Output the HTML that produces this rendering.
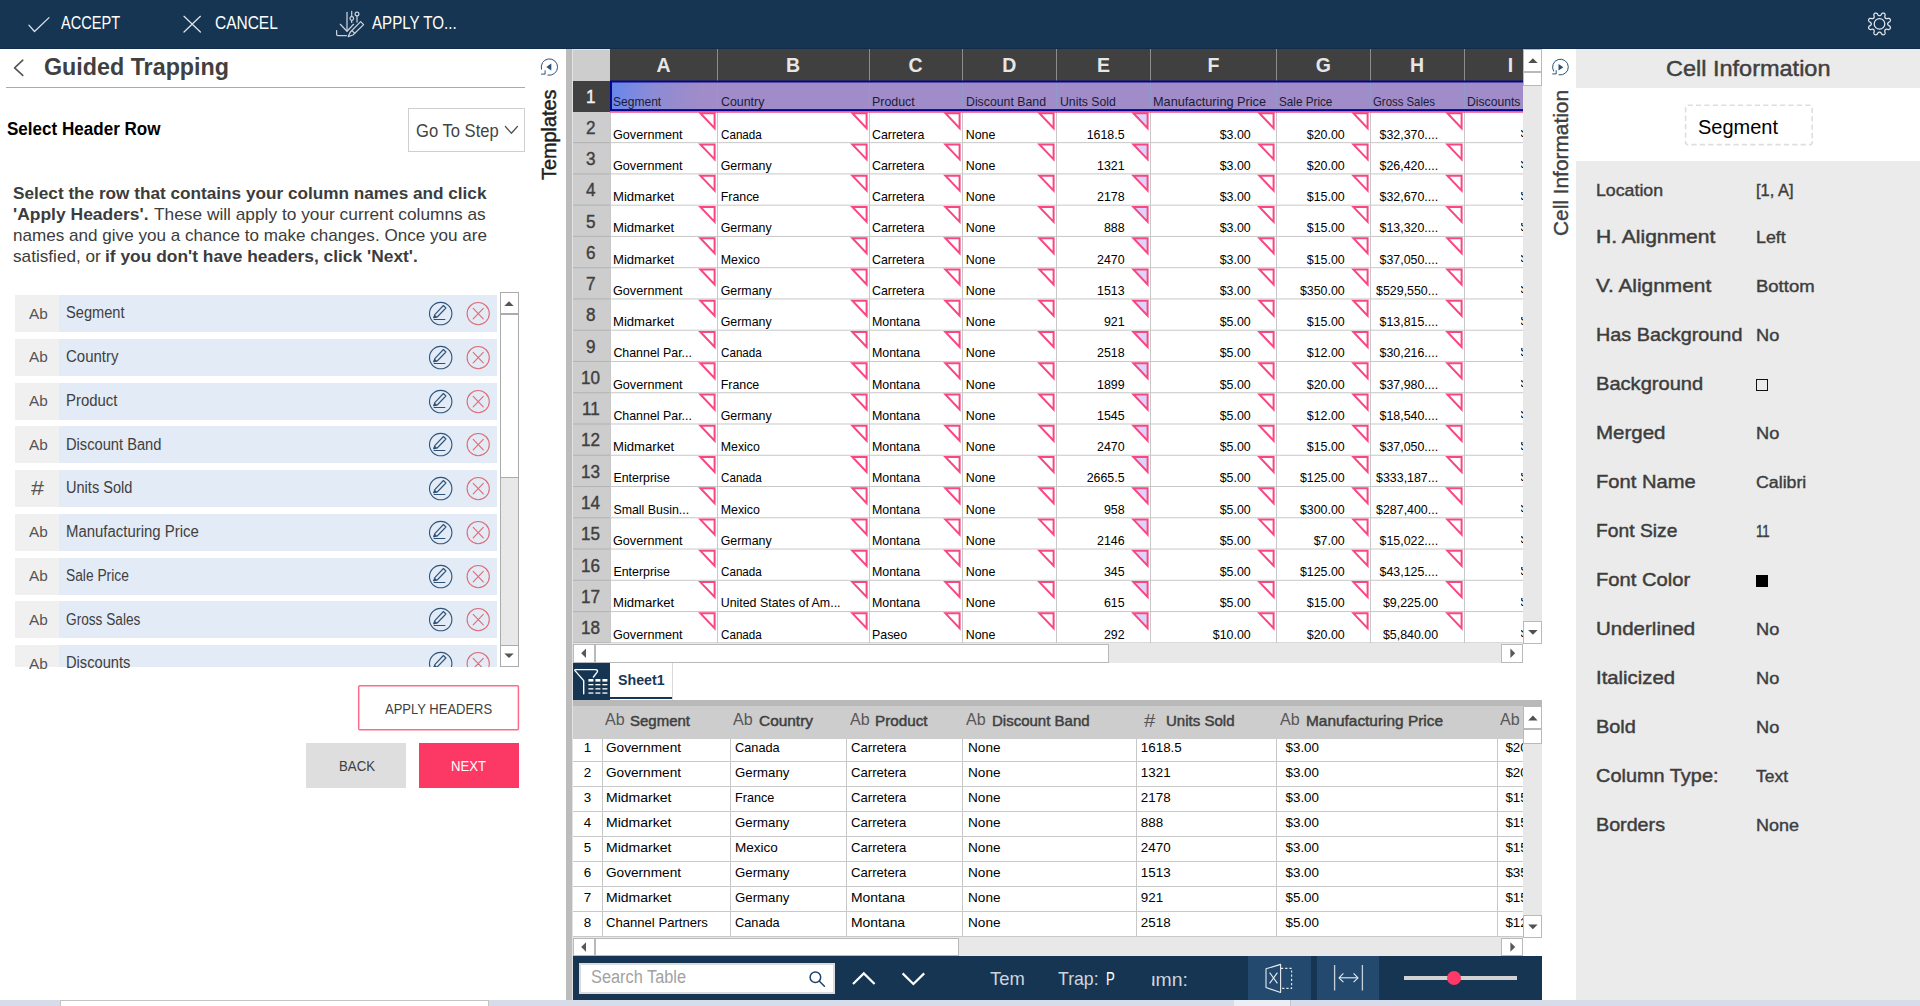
<!DOCTYPE html><html><head><meta charset="utf-8"><title>Guided Trapping</title><style>
html,body{margin:0;padding:0;}body{width:1920px;height:1006px;position:relative;overflow:hidden;background:#fff;font-family:"Liberation Sans",sans-serif;}div,span,svg{position:absolute;box-sizing:border-box;}span.t{white-space:pre;transform-origin:0 0;line-height:1;}svg{overflow:visible}
</style></head><body>
<div style="left:0px;top:0px;width:1920px;height:49px;background:#163553;"></div>
<div style="left:0px;top:48px;width:1920px;height:1px;background:#102e4b;"></div>
<div style="left:566px;top:49px;width:6px;height:951px;background:#bcbcbc;"></div>
<div style="left:572px;top:49px;width:1px;height:951px;background:#e2e2e2;"></div>
<div style="left:1576px;top:49px;width:344px;height:951px;background:#ebebeb;"></div>
<div style="left:1576px;top:88px;width:344px;height:73px;background:#fff;"></div>
<div style="left:0px;top:1000px;width:1920px;height:6px;background:#d6dce9;"></div>
<div style="left:60px;top:1000px;width:429px;height:6px;background:#fff;border:1px solid #c4c4c4;border-bottom:none;"></div>
<div style="left:1234px;top:1000px;width:57px;height:6px;background:#eceef5;border-right:1px solid #bfc4cf;"></div>
<svg style="left:0;top:0" width="480" height="48" fill="none" stroke="#dfe4ea" stroke-width="1.25" stroke-linecap="round" stroke-linejoin="round"><path d="M28.9 25.2 L34.5 31.5 L49 17.6"/><path d="M184 16.3 L200.4 32 M200.4 16.3 L184 32"/><g stroke="#c9d1da"><path d="M347 12.4 V30.8"/><path d="M340.3 24.3 L347 31.3 L353.6 24.3"/><path d="M336.6 30.5 V34.3 Q336.6 35.6 337.9 35.6 H346.4"/><path d="M351.7 11.3 V16.4 M351.7 20.6 V22.4"/><circle cx="351.8" cy="18.5" r="1.8"/><circle cx="357" cy="14" r="1.9"/><path d="M357 16 V22"/><path d="M350.2 32.2 L360.6 21.6 L363.6 24.6 L353 35 L348.2 36.6 Z"/><path d="M352 30.6 L354.7 33.3"/></g></svg>
<svg style="left:0;top:0" width="1920" height="48" fill="none" stroke="#e3e8ee" stroke-width="1.25" stroke-linejoin="round"><path d="M1887.65 23.90 L1887.67 24.11 L1887.73 24.33 L1887.83 24.56 L1887.98 24.79 L1888.17 25.04 L1888.42 25.31 L1888.79 25.62 L1889.63 26.05 L1889.97 26.41 L1890.18 26.76 L1890.31 27.10 L1890.38 27.44 L1890.39 27.76 L1890.35 28.07 L1890.26 28.36 L1890.12 28.63 L1889.93 28.88 L1889.69 29.09 L1889.41 29.28 L1889.07 29.43 L1888.68 29.52 L1888.18 29.54 L1887.29 29.25 L1886.81 29.21 L1886.44 29.22 L1886.13 29.26 L1885.86 29.33 L1885.63 29.42 L1885.43 29.53 L1885.26 29.66 L1885.13 29.83 L1885.02 30.03 L1884.93 30.26 L1884.86 30.53 L1884.82 30.84 L1884.81 31.21 L1884.85 31.69 L1885.14 32.58 L1885.12 33.08 L1885.03 33.47 L1884.88 33.81 L1884.69 34.09 L1884.48 34.33 L1884.23 34.52 L1883.96 34.66 L1883.67 34.75 L1883.36 34.79 L1883.04 34.78 L1882.70 34.71 L1882.36 34.58 L1882.01 34.37 L1881.65 34.03 L1881.22 33.19 L1880.91 32.82 L1880.64 32.57 L1880.39 32.38 L1880.16 32.23 L1879.93 32.13 L1879.71 32.07 L1879.50 32.05 L1879.29 32.07 L1879.07 32.13 L1878.84 32.23 L1878.61 32.38 L1878.36 32.57 L1878.09 32.82 L1877.78 33.19 L1877.35 34.03 L1876.99 34.37 L1876.64 34.58 L1876.30 34.71 L1875.96 34.78 L1875.64 34.79 L1875.33 34.75 L1875.04 34.66 L1874.77 34.52 L1874.52 34.33 L1874.31 34.09 L1874.12 33.81 L1873.97 33.47 L1873.88 33.08 L1873.86 32.58 L1874.15 31.69 L1874.19 31.21 L1874.18 30.84 L1874.14 30.53 L1874.07 30.26 L1873.98 30.03 L1873.87 29.83 L1873.74 29.66 L1873.57 29.53 L1873.37 29.42 L1873.14 29.33 L1872.87 29.26 L1872.56 29.22 L1872.19 29.21 L1871.71 29.25 L1870.82 29.54 L1870.32 29.52 L1869.93 29.43 L1869.59 29.28 L1869.31 29.09 L1869.07 28.88 L1868.88 28.63 L1868.74 28.36 L1868.65 28.07 L1868.61 27.76 L1868.62 27.44 L1868.69 27.10 L1868.82 26.76 L1869.03 26.41 L1869.37 26.05 L1870.21 25.62 L1870.58 25.31 L1870.83 25.04 L1871.02 24.79 L1871.17 24.56 L1871.27 24.33 L1871.33 24.11 L1871.35 23.90 L1871.33 23.69 L1871.27 23.47 L1871.17 23.24 L1871.02 23.01 L1870.83 22.76 L1870.58 22.49 L1870.21 22.18 L1869.37 21.75 L1869.03 21.39 L1868.82 21.04 L1868.69 20.70 L1868.62 20.36 L1868.61 20.04 L1868.65 19.73 L1868.74 19.44 L1868.88 19.17 L1869.07 18.92 L1869.31 18.71 L1869.59 18.52 L1869.93 18.37 L1870.32 18.28 L1870.82 18.26 L1871.71 18.55 L1872.19 18.59 L1872.56 18.58 L1872.87 18.54 L1873.14 18.47 L1873.37 18.38 L1873.57 18.27 L1873.74 18.14 L1873.87 17.97 L1873.98 17.77 L1874.07 17.54 L1874.14 17.27 L1874.18 16.96 L1874.19 16.59 L1874.15 16.11 L1873.86 15.22 L1873.88 14.72 L1873.97 14.33 L1874.12 13.99 L1874.31 13.71 L1874.52 13.47 L1874.77 13.28 L1875.04 13.14 L1875.33 13.05 L1875.64 13.01 L1875.96 13.02 L1876.30 13.09 L1876.64 13.22 L1876.99 13.43 L1877.35 13.77 L1877.78 14.61 L1878.09 14.98 L1878.36 15.23 L1878.61 15.42 L1878.84 15.57 L1879.07 15.67 L1879.29 15.73 L1879.50 15.75 L1879.71 15.73 L1879.93 15.67 L1880.16 15.57 L1880.39 15.42 L1880.64 15.23 L1880.91 14.98 L1881.22 14.61 L1881.65 13.77 L1882.01 13.43 L1882.36 13.22 L1882.70 13.09 L1883.04 13.02 L1883.36 13.01 L1883.67 13.05 L1883.96 13.14 L1884.23 13.28 L1884.48 13.47 L1884.69 13.71 L1884.88 13.99 L1885.03 14.33 L1885.12 14.72 L1885.14 15.22 L1884.85 16.11 L1884.81 16.59 L1884.82 16.96 L1884.86 17.27 L1884.93 17.54 L1885.02 17.77 L1885.13 17.97 L1885.26 18.14 L1885.43 18.27 L1885.63 18.38 L1885.86 18.47 L1886.13 18.54 L1886.44 18.58 L1886.81 18.59 L1887.29 18.55 L1888.18 18.26 L1888.68 18.28 L1889.07 18.37 L1889.41 18.52 L1889.69 18.71 L1889.93 18.92 L1890.12 19.17 L1890.26 19.44 L1890.35 19.73 L1890.39 20.04 L1890.38 20.36 L1890.31 20.70 L1890.18 21.04 L1889.97 21.39 L1889.63 21.75 L1888.79 22.18 L1888.42 22.49 L1888.17 22.76 L1887.98 23.01 L1887.83 23.24 L1887.73 23.47 L1887.67 23.69 Z"/><circle cx="1879.5" cy="23.9" r="5.3"/></svg>
<svg style="left:0;top:48px" width="566" height="60" fill="none" stroke="#555" stroke-width="1.6" stroke-linecap="round" stroke-linejoin="round"><path d="M22.8 12.2 L14.6 19.8 L22.8 27.4"/></svg>
<div style="left:6px;top:87px;width:519px;height:1px;background:#aaaaaa;"></div>
<div style="left:408px;top:108px;width:117px;height:43.5px;background:#fff;border:1px solid #cfcfcf;"></div>
<svg style="left:500px;top:120px" width="24" height="20" fill="none" stroke="#555" stroke-width="1.3" stroke-linecap="round" stroke-linejoin="round"><path d="M5.4 6.5 L11.4 13.3 L17.4 6.5"/></svg>
<div style="left:0;top:292px;width:500px;height:374.5px;overflow:hidden">
<div style="left:15px;top:3.00px;width:44px;height:37px;background:#f0f0f0"></div><div style="left:59px;top:3.00px;width:438px;height:37px;background:#e3ebf6"></div>
<svg style="left:0;top:3.00px" width="500" height="37" fill="none" stroke-width="1.1" stroke-linecap="round" stroke-linejoin="round"><g stroke="#2c5279"><circle cx="440.7" cy="18.6" r="11.2"/><path d="M433.9 22.7 L434.8 19.7 L443.4 10.5 L445.9 13 L437.2 22 Z"/><path d="M434.1 24.5 H444.9"/><path d="M433.9 22.7 L434.6 20.3 L436.4 22 Z" fill="#2c5279"/></g><g stroke="#dd6d74"><circle cx="478.2" cy="18.6" r="11.1"/><path d="M473.2 13.4 L483.3 23.8 M483.3 13.4 L473.2 23.8"/></g></svg>
<div style="left:15px;top:46.75px;width:44px;height:37px;background:#f0f0f0"></div><div style="left:59px;top:46.75px;width:438px;height:37px;background:#e3ebf6"></div>
<svg style="left:0;top:46.75px" width="500" height="37" fill="none" stroke-width="1.1" stroke-linecap="round" stroke-linejoin="round"><g stroke="#2c5279"><circle cx="440.7" cy="18.6" r="11.2"/><path d="M433.9 22.7 L434.8 19.7 L443.4 10.5 L445.9 13 L437.2 22 Z"/><path d="M434.1 24.5 H444.9"/><path d="M433.9 22.7 L434.6 20.3 L436.4 22 Z" fill="#2c5279"/></g><g stroke="#dd6d74"><circle cx="478.2" cy="18.6" r="11.1"/><path d="M473.2 13.4 L483.3 23.8 M483.3 13.4 L473.2 23.8"/></g></svg>
<div style="left:15px;top:90.50px;width:44px;height:37px;background:#f0f0f0"></div><div style="left:59px;top:90.50px;width:438px;height:37px;background:#e3ebf6"></div>
<svg style="left:0;top:90.50px" width="500" height="37" fill="none" stroke-width="1.1" stroke-linecap="round" stroke-linejoin="round"><g stroke="#2c5279"><circle cx="440.7" cy="18.6" r="11.2"/><path d="M433.9 22.7 L434.8 19.7 L443.4 10.5 L445.9 13 L437.2 22 Z"/><path d="M434.1 24.5 H444.9"/><path d="M433.9 22.7 L434.6 20.3 L436.4 22 Z" fill="#2c5279"/></g><g stroke="#dd6d74"><circle cx="478.2" cy="18.6" r="11.1"/><path d="M473.2 13.4 L483.3 23.8 M483.3 13.4 L473.2 23.8"/></g></svg>
<div style="left:15px;top:134.25px;width:44px;height:37px;background:#f0f0f0"></div><div style="left:59px;top:134.25px;width:438px;height:37px;background:#e3ebf6"></div>
<svg style="left:0;top:134.25px" width="500" height="37" fill="none" stroke-width="1.1" stroke-linecap="round" stroke-linejoin="round"><g stroke="#2c5279"><circle cx="440.7" cy="18.6" r="11.2"/><path d="M433.9 22.7 L434.8 19.7 L443.4 10.5 L445.9 13 L437.2 22 Z"/><path d="M434.1 24.5 H444.9"/><path d="M433.9 22.7 L434.6 20.3 L436.4 22 Z" fill="#2c5279"/></g><g stroke="#dd6d74"><circle cx="478.2" cy="18.6" r="11.1"/><path d="M473.2 13.4 L483.3 23.8 M483.3 13.4 L473.2 23.8"/></g></svg>
<div style="left:15px;top:178.00px;width:44px;height:37px;background:#f0f0f0"></div><div style="left:59px;top:178.00px;width:438px;height:37px;background:#e3ebf6"></div>
<svg style="left:0;top:178.00px" width="500" height="37" fill="none" stroke-width="1.1" stroke-linecap="round" stroke-linejoin="round"><g stroke="#2c5279"><circle cx="440.7" cy="18.6" r="11.2"/><path d="M433.9 22.7 L434.8 19.7 L443.4 10.5 L445.9 13 L437.2 22 Z"/><path d="M434.1 24.5 H444.9"/><path d="M433.9 22.7 L434.6 20.3 L436.4 22 Z" fill="#2c5279"/></g><g stroke="#dd6d74"><circle cx="478.2" cy="18.6" r="11.1"/><path d="M473.2 13.4 L483.3 23.8 M483.3 13.4 L473.2 23.8"/></g></svg>
<div style="left:15px;top:221.75px;width:44px;height:37px;background:#f0f0f0"></div><div style="left:59px;top:221.75px;width:438px;height:37px;background:#e3ebf6"></div>
<svg style="left:0;top:221.75px" width="500" height="37" fill="none" stroke-width="1.1" stroke-linecap="round" stroke-linejoin="round"><g stroke="#2c5279"><circle cx="440.7" cy="18.6" r="11.2"/><path d="M433.9 22.7 L434.8 19.7 L443.4 10.5 L445.9 13 L437.2 22 Z"/><path d="M434.1 24.5 H444.9"/><path d="M433.9 22.7 L434.6 20.3 L436.4 22 Z" fill="#2c5279"/></g><g stroke="#dd6d74"><circle cx="478.2" cy="18.6" r="11.1"/><path d="M473.2 13.4 L483.3 23.8 M483.3 13.4 L473.2 23.8"/></g></svg>
<div style="left:15px;top:265.50px;width:44px;height:37px;background:#f0f0f0"></div><div style="left:59px;top:265.50px;width:438px;height:37px;background:#e3ebf6"></div>
<svg style="left:0;top:265.50px" width="500" height="37" fill="none" stroke-width="1.1" stroke-linecap="round" stroke-linejoin="round"><g stroke="#2c5279"><circle cx="440.7" cy="18.6" r="11.2"/><path d="M433.9 22.7 L434.8 19.7 L443.4 10.5 L445.9 13 L437.2 22 Z"/><path d="M434.1 24.5 H444.9"/><path d="M433.9 22.7 L434.6 20.3 L436.4 22 Z" fill="#2c5279"/></g><g stroke="#dd6d74"><circle cx="478.2" cy="18.6" r="11.1"/><path d="M473.2 13.4 L483.3 23.8 M483.3 13.4 L473.2 23.8"/></g></svg>
<div style="left:15px;top:309.25px;width:44px;height:37px;background:#f0f0f0"></div><div style="left:59px;top:309.25px;width:438px;height:37px;background:#e3ebf6"></div>
<svg style="left:0;top:309.25px" width="500" height="37" fill="none" stroke-width="1.1" stroke-linecap="round" stroke-linejoin="round"><g stroke="#2c5279"><circle cx="440.7" cy="18.6" r="11.2"/><path d="M433.9 22.7 L434.8 19.7 L443.4 10.5 L445.9 13 L437.2 22 Z"/><path d="M434.1 24.5 H444.9"/><path d="M433.9 22.7 L434.6 20.3 L436.4 22 Z" fill="#2c5279"/></g><g stroke="#dd6d74"><circle cx="478.2" cy="18.6" r="11.1"/><path d="M473.2 13.4 L483.3 23.8 M483.3 13.4 L473.2 23.8"/></g></svg>
<div style="left:15px;top:353.00px;width:44px;height:37px;background:#f0f0f0"></div><div style="left:59px;top:353.00px;width:438px;height:37px;background:#e3ebf6"></div>
<svg style="left:0;top:353.00px" width="500" height="37" fill="none" stroke-width="1.1" stroke-linecap="round" stroke-linejoin="round"><g stroke="#2c5279"><circle cx="440.7" cy="18.6" r="11.2"/><path d="M433.9 22.7 L434.8 19.7 L443.4 10.5 L445.9 13 L437.2 22 Z"/><path d="M434.1 24.5 H444.9"/><path d="M433.9 22.7 L434.6 20.3 L436.4 22 Z" fill="#2c5279"/></g><g stroke="#dd6d74"><circle cx="478.2" cy="18.6" r="11.1"/><path d="M473.2 13.4 L483.3 23.8 M483.3 13.4 L473.2 23.8"/></g></svg>
</div>
<div style="left:0px;top:666.5px;width:500px;height:18px;background:#fff;"></div>
<div style="left:500px;top:292px;width:19px;height:374.5px;background:#e8e8e8;border-left:1px solid #ababab;border-right:1px solid #ababab;"></div>
<div style="left:500px;top:292px;width:19px;height:21.5px;background:#fff;border:1px solid #ababab;"></div>
<div style="left:500px;top:313px;width:19px;height:165px;background:#fff;border:1px solid #ababab;border-top:2px solid #ababab;"></div>
<div style="left:500px;top:645px;width:19px;height:21.5px;background:#fff;border:1px solid #ababab;"></div>
<svg style="left:500px;top:292px" width="19" height="375" fill="#555"><path d="M4.3 13.9 L9 9.2 L13.7 13.9 Z"/><path d="M4.3 361.4 L9 366.1 L13.7 361.4 Z"/></svg>
<svg style="left:350px;top:680px" width="180" height="60"><rect x="8.7" y="5.85" width="159.7" height="43.95" rx="1" fill="#fff" stroke="#ff6a8a" stroke-width="1.5"/></svg>
<div style="left:306px;top:743px;width:100px;height:45px;background:#dedede;"></div>
<div style="left:419px;top:743px;width:100px;height:45px;background:#fc3865;"></div>
<svg style="left:530px;top:48px" width="36" height="40" fill="none" stroke="#2c5279" stroke-width="1" stroke-linecap="round"><path d="M17.93 27.18 A8.2 8.2 0 1 0 11.43 21.22"/><path d="M11.5 26.1 H15.1 V22.7"/><path d="M21.3 15.6 V22.4 L16.3 19 Z" fill="#2c5279" stroke="none"/></svg>
<div style="left:573px;top:49px;width:950px;height:594px;overflow:hidden;background:#fff">
<div style="left:0;top:0;width:37.0px;height:594px;background:#cdcdcd"></div>
<div style="left:0;top:0;width:37.0px;height:1px;background:#e0e0e0"></div>
<div style="left:37.0px;top:0;width:1000px;height:32px;background:#404040"></div>
<div style="left:0;top:31.5px;width:37.0px;height:31px;background:#404040"></div>
<div style="left:144px;top:0;width:1px;height:32px;background:#8c8c8c"></div>
<div style="left:296px;top:0;width:1px;height:32px;background:#8c8c8c"></div>
<div style="left:389px;top:0;width:1px;height:32px;background:#8c8c8c"></div>
<div style="left:483px;top:0;width:1px;height:32px;background:#8c8c8c"></div>
<div style="left:577px;top:0;width:1px;height:32px;background:#8c8c8c"></div>
<div style="left:703px;top:0;width:1px;height:32px;background:#8c8c8c"></div>
<div style="left:797px;top:0;width:1px;height:32px;background:#8c8c8c"></div>
<div style="left:891px;top:0;width:1px;height:32px;background:#8c8c8c"></div>
<svg style="left:0;top:0" width="950" height="594" fill="#c8c8c8"><rect x="0" y="93.15" width="1000" height="1"/><rect x="0" y="93.15" width="37" height="1" fill="#b4b4b4"/><rect x="0" y="124.41" width="1000" height="1"/><rect x="0" y="124.41" width="37" height="1" fill="#b4b4b4"/><rect x="0" y="155.67" width="1000" height="1"/><rect x="0" y="155.67" width="37" height="1" fill="#b4b4b4"/><rect x="0" y="186.93" width="1000" height="1"/><rect x="0" y="186.93" width="37" height="1" fill="#b4b4b4"/><rect x="0" y="218.19" width="1000" height="1"/><rect x="0" y="218.19" width="37" height="1" fill="#b4b4b4"/><rect x="0" y="249.45" width="1000" height="1"/><rect x="0" y="249.45" width="37" height="1" fill="#b4b4b4"/><rect x="0" y="280.71" width="1000" height="1"/><rect x="0" y="280.71" width="37" height="1" fill="#b4b4b4"/><rect x="0" y="311.97" width="1000" height="1"/><rect x="0" y="311.97" width="37" height="1" fill="#b4b4b4"/><rect x="0" y="343.23" width="1000" height="1"/><rect x="0" y="343.23" width="37" height="1" fill="#b4b4b4"/><rect x="0" y="374.49" width="1000" height="1"/><rect x="0" y="374.49" width="37" height="1" fill="#b4b4b4"/><rect x="0" y="405.75" width="1000" height="1"/><rect x="0" y="405.75" width="37" height="1" fill="#b4b4b4"/><rect x="0" y="437.01" width="1000" height="1"/><rect x="0" y="437.01" width="37" height="1" fill="#b4b4b4"/><rect x="0" y="468.27" width="1000" height="1"/><rect x="0" y="468.27" width="37" height="1" fill="#b4b4b4"/><rect x="0" y="499.53" width="1000" height="1"/><rect x="0" y="499.53" width="37" height="1" fill="#b4b4b4"/><rect x="0" y="530.79" width="1000" height="1"/><rect x="0" y="530.79" width="37" height="1" fill="#b4b4b4"/><rect x="0" y="562.05" width="1000" height="1"/><rect x="0" y="562.05" width="37" height="1" fill="#b4b4b4"/><rect x="0" y="593.31" width="1000" height="1"/><rect x="0" y="593.31" width="37" height="1" fill="#b4b4b4"/><rect x="0" y="624.57" width="1000" height="1"/><rect x="0" y="624.57" width="37" height="1" fill="#b4b4b4"/></svg>
<div style="left:37px;top:63px;width:1px;height:600px;background:#c8c8c8"></div>
<div style="left:144px;top:63px;width:1px;height:600px;background:#c8c8c8"></div>
<div style="left:296px;top:63px;width:1px;height:600px;background:#c8c8c8"></div>
<div style="left:389px;top:63px;width:1px;height:600px;background:#c8c8c8"></div>
<div style="left:483px;top:63px;width:1px;height:600px;background:#c8c8c8"></div>
<div style="left:577px;top:63px;width:1px;height:600px;background:#c8c8c8"></div>
<div style="left:703px;top:63px;width:1px;height:600px;background:#c8c8c8"></div>
<div style="left:797px;top:63px;width:1px;height:600px;background:#c8c8c8"></div>
<div style="left:891px;top:63px;width:1px;height:600px;background:#c8c8c8"></div>
<svg style="left:0;top:0" width="950" height="594" fill="none" stroke="#fa4682" stroke-width="2" stroke-linejoin="miter"><path d="M127.4 64.30 H141.6 V79.20 Z" fill="none"/><path d="M279.4 64.30 H293.6 V79.20 Z" fill="none"/><path d="M372.4 64.30 H386.6 V79.20 Z" fill="none"/><path d="M466.4 64.30 H480.6 V79.20 Z" fill="none"/><path d="M560.4 64.30 H574.6 V79.20 Z" fill="#dcd4fb"/><path d="M686.4 64.30 H700.6 V79.20 Z" fill="none"/><path d="M780.4 64.30 H794.6 V79.20 Z" fill="none"/><path d="M874.4 64.30 H888.6 V79.20 Z" fill="none"/><path d="M127.4 95.45 H141.6 V110.35 Z" fill="none"/><path d="M279.4 95.45 H293.6 V110.35 Z" fill="none"/><path d="M372.4 95.45 H386.6 V110.35 Z" fill="none"/><path d="M466.4 95.45 H480.6 V110.35 Z" fill="none"/><path d="M560.4 95.45 H574.6 V110.35 Z" fill="#dcd4fb"/><path d="M686.4 95.45 H700.6 V110.35 Z" fill="none"/><path d="M780.4 95.45 H794.6 V110.35 Z" fill="none"/><path d="M874.4 95.45 H888.6 V110.35 Z" fill="none"/><path d="M127.4 126.71 H141.6 V141.61 Z" fill="none"/><path d="M279.4 126.71 H293.6 V141.61 Z" fill="none"/><path d="M372.4 126.71 H386.6 V141.61 Z" fill="none"/><path d="M466.4 126.71 H480.6 V141.61 Z" fill="none"/><path d="M560.4 126.71 H574.6 V141.61 Z" fill="#dcd4fb"/><path d="M686.4 126.71 H700.6 V141.61 Z" fill="none"/><path d="M780.4 126.71 H794.6 V141.61 Z" fill="none"/><path d="M874.4 126.71 H888.6 V141.61 Z" fill="none"/><path d="M127.4 157.97 H141.6 V172.87 Z" fill="none"/><path d="M279.4 157.97 H293.6 V172.87 Z" fill="none"/><path d="M372.4 157.97 H386.6 V172.87 Z" fill="none"/><path d="M466.4 157.97 H480.6 V172.87 Z" fill="none"/><path d="M560.4 157.97 H574.6 V172.87 Z" fill="#dcd4fb"/><path d="M686.4 157.97 H700.6 V172.87 Z" fill="none"/><path d="M780.4 157.97 H794.6 V172.87 Z" fill="none"/><path d="M874.4 157.97 H888.6 V172.87 Z" fill="none"/><path d="M127.4 189.23 H141.6 V204.13 Z" fill="none"/><path d="M279.4 189.23 H293.6 V204.13 Z" fill="none"/><path d="M372.4 189.23 H386.6 V204.13 Z" fill="none"/><path d="M466.4 189.23 H480.6 V204.13 Z" fill="none"/><path d="M560.4 189.23 H574.6 V204.13 Z" fill="#dcd4fb"/><path d="M686.4 189.23 H700.6 V204.13 Z" fill="none"/><path d="M780.4 189.23 H794.6 V204.13 Z" fill="none"/><path d="M874.4 189.23 H888.6 V204.13 Z" fill="none"/><path d="M127.4 220.49 H141.6 V235.39 Z" fill="none"/><path d="M279.4 220.49 H293.6 V235.39 Z" fill="none"/><path d="M372.4 220.49 H386.6 V235.39 Z" fill="none"/><path d="M466.4 220.49 H480.6 V235.39 Z" fill="none"/><path d="M560.4 220.49 H574.6 V235.39 Z" fill="#dcd4fb"/><path d="M686.4 220.49 H700.6 V235.39 Z" fill="none"/><path d="M780.4 220.49 H794.6 V235.39 Z" fill="none"/><path d="M874.4 220.49 H888.6 V235.39 Z" fill="none"/><path d="M127.4 251.75 H141.6 V266.65 Z" fill="none"/><path d="M279.4 251.75 H293.6 V266.65 Z" fill="none"/><path d="M372.4 251.75 H386.6 V266.65 Z" fill="none"/><path d="M466.4 251.75 H480.6 V266.65 Z" fill="none"/><path d="M560.4 251.75 H574.6 V266.65 Z" fill="#dcd4fb"/><path d="M686.4 251.75 H700.6 V266.65 Z" fill="none"/><path d="M780.4 251.75 H794.6 V266.65 Z" fill="none"/><path d="M874.4 251.75 H888.6 V266.65 Z" fill="none"/><path d="M127.4 283.01 H141.6 V297.91 Z" fill="none"/><path d="M279.4 283.01 H293.6 V297.91 Z" fill="none"/><path d="M372.4 283.01 H386.6 V297.91 Z" fill="none"/><path d="M466.4 283.01 H480.6 V297.91 Z" fill="none"/><path d="M560.4 283.01 H574.6 V297.91 Z" fill="#dcd4fb"/><path d="M686.4 283.01 H700.6 V297.91 Z" fill="none"/><path d="M780.4 283.01 H794.6 V297.91 Z" fill="none"/><path d="M874.4 283.01 H888.6 V297.91 Z" fill="none"/><path d="M127.4 314.27 H141.6 V329.17 Z" fill="none"/><path d="M279.4 314.27 H293.6 V329.17 Z" fill="none"/><path d="M372.4 314.27 H386.6 V329.17 Z" fill="none"/><path d="M466.4 314.27 H480.6 V329.17 Z" fill="none"/><path d="M560.4 314.27 H574.6 V329.17 Z" fill="#dcd4fb"/><path d="M686.4 314.27 H700.6 V329.17 Z" fill="none"/><path d="M780.4 314.27 H794.6 V329.17 Z" fill="none"/><path d="M874.4 314.27 H888.6 V329.17 Z" fill="none"/><path d="M127.4 345.53 H141.6 V360.43 Z" fill="none"/><path d="M279.4 345.53 H293.6 V360.43 Z" fill="none"/><path d="M372.4 345.53 H386.6 V360.43 Z" fill="none"/><path d="M466.4 345.53 H480.6 V360.43 Z" fill="none"/><path d="M560.4 345.53 H574.6 V360.43 Z" fill="#dcd4fb"/><path d="M686.4 345.53 H700.6 V360.43 Z" fill="none"/><path d="M780.4 345.53 H794.6 V360.43 Z" fill="none"/><path d="M874.4 345.53 H888.6 V360.43 Z" fill="none"/><path d="M127.4 376.79 H141.6 V391.69 Z" fill="none"/><path d="M279.4 376.79 H293.6 V391.69 Z" fill="none"/><path d="M372.4 376.79 H386.6 V391.69 Z" fill="none"/><path d="M466.4 376.79 H480.6 V391.69 Z" fill="none"/><path d="M560.4 376.79 H574.6 V391.69 Z" fill="#dcd4fb"/><path d="M686.4 376.79 H700.6 V391.69 Z" fill="none"/><path d="M780.4 376.79 H794.6 V391.69 Z" fill="none"/><path d="M874.4 376.79 H888.6 V391.69 Z" fill="none"/><path d="M127.4 408.05 H141.6 V422.95 Z" fill="none"/><path d="M279.4 408.05 H293.6 V422.95 Z" fill="none"/><path d="M372.4 408.05 H386.6 V422.95 Z" fill="none"/><path d="M466.4 408.05 H480.6 V422.95 Z" fill="none"/><path d="M560.4 408.05 H574.6 V422.95 Z" fill="#dcd4fb"/><path d="M686.4 408.05 H700.6 V422.95 Z" fill="none"/><path d="M780.4 408.05 H794.6 V422.95 Z" fill="none"/><path d="M874.4 408.05 H888.6 V422.95 Z" fill="none"/><path d="M127.4 439.31 H141.6 V454.21 Z" fill="none"/><path d="M279.4 439.31 H293.6 V454.21 Z" fill="none"/><path d="M372.4 439.31 H386.6 V454.21 Z" fill="none"/><path d="M466.4 439.31 H480.6 V454.21 Z" fill="none"/><path d="M560.4 439.31 H574.6 V454.21 Z" fill="#dcd4fb"/><path d="M686.4 439.31 H700.6 V454.21 Z" fill="none"/><path d="M780.4 439.31 H794.6 V454.21 Z" fill="none"/><path d="M874.4 439.31 H888.6 V454.21 Z" fill="none"/><path d="M127.4 470.57 H141.6 V485.47 Z" fill="none"/><path d="M279.4 470.57 H293.6 V485.47 Z" fill="none"/><path d="M372.4 470.57 H386.6 V485.47 Z" fill="none"/><path d="M466.4 470.57 H480.6 V485.47 Z" fill="none"/><path d="M560.4 470.57 H574.6 V485.47 Z" fill="#dcd4fb"/><path d="M686.4 470.57 H700.6 V485.47 Z" fill="none"/><path d="M780.4 470.57 H794.6 V485.47 Z" fill="none"/><path d="M874.4 470.57 H888.6 V485.47 Z" fill="none"/><path d="M127.4 501.83 H141.6 V516.73 Z" fill="none"/><path d="M279.4 501.83 H293.6 V516.73 Z" fill="none"/><path d="M372.4 501.83 H386.6 V516.73 Z" fill="none"/><path d="M466.4 501.83 H480.6 V516.73 Z" fill="none"/><path d="M560.4 501.83 H574.6 V516.73 Z" fill="#dcd4fb"/><path d="M686.4 501.83 H700.6 V516.73 Z" fill="none"/><path d="M780.4 501.83 H794.6 V516.73 Z" fill="none"/><path d="M874.4 501.83 H888.6 V516.73 Z" fill="none"/><path d="M127.4 533.09 H141.6 V547.99 Z" fill="none"/><path d="M279.4 533.09 H293.6 V547.99 Z" fill="none"/><path d="M372.4 533.09 H386.6 V547.99 Z" fill="none"/><path d="M466.4 533.09 H480.6 V547.99 Z" fill="none"/><path d="M560.4 533.09 H574.6 V547.99 Z" fill="#dcd4fb"/><path d="M686.4 533.09 H700.6 V547.99 Z" fill="none"/><path d="M780.4 533.09 H794.6 V547.99 Z" fill="none"/><path d="M874.4 533.09 H888.6 V547.99 Z" fill="none"/><path d="M127.4 564.35 H141.6 V579.25 Z" fill="none"/><path d="M279.4 564.35 H293.6 V579.25 Z" fill="none"/><path d="M372.4 564.35 H386.6 V579.25 Z" fill="none"/><path d="M466.4 564.35 H480.6 V579.25 Z" fill="none"/><path d="M560.4 564.35 H574.6 V579.25 Z" fill="#dcd4fb"/><path d="M686.4 564.35 H700.6 V579.25 Z" fill="none"/><path d="M780.4 564.35 H794.6 V579.25 Z" fill="none"/><path d="M874.4 564.35 H888.6 V579.25 Z" fill="none"/><path d="M127.4 595.61 H141.6 V610.51 Z" fill="none"/><path d="M279.4 595.61 H293.6 V610.51 Z" fill="none"/><path d="M372.4 595.61 H386.6 V610.51 Z" fill="none"/><path d="M466.4 595.61 H480.6 V610.51 Z" fill="none"/><path d="M560.4 595.61 H574.6 V610.51 Z" fill="#dcd4fb"/><path d="M686.4 595.61 H700.6 V610.51 Z" fill="none"/><path d="M780.4 595.61 H794.6 V610.51 Z" fill="none"/><path d="M874.4 595.61 H888.6 V610.51 Z" fill="none"/></svg>
<div style="left:37px;top:32px;width:1000px;height:30px;background:linear-gradient(100deg,#6487ee 0px,#8b8bd6 42px,#a08cc8 92px,#a08cc8 100%)"></div>
<svg style="left:0;top:0" width="950" height="70"><rect x="144" y="33" width="1" height="27" fill="#8e9ac8"/><rect x="296" y="33" width="1" height="27" fill="#8e9ac8"/><rect x="389" y="33" width="1" height="27" fill="#8e9ac8"/><rect x="483" y="33" width="1" height="27" fill="#8e9ac8"/><rect x="577" y="33" width="1" height="27" fill="#8e9ac8"/><rect x="703" y="33" width="1" height="27" fill="#8e9ac8"/><rect x="797" y="33" width="1" height="27" fill="#8e9ac8"/><rect x="891" y="33" width="1" height="27" fill="#8e9ac8"/><rect x="38" y="32.5" width="1000" height="28.6" fill="none" stroke="#06068c" stroke-width="2"/><rect x="37" y="62.1" width="1000" height="1.6" fill="#fa4682"/></svg>
</div>
<div style="left:1520.5px;top:129.6px;width:2.5px;height:10px;overflow:hidden"><span style="position:absolute;left:0;top:-2.5px;font-size:12.4px;line-height:1;color:#000">$</span></div>
<div style="left:1520.5px;top:160.75px;width:2.5px;height:10px;overflow:hidden"><span style="position:absolute;left:0;top:-2.5px;font-size:12.4px;line-height:1;color:#000">$</span></div>
<div style="left:1520.5px;top:192.01px;width:2.5px;height:10px;overflow:hidden"><span style="position:absolute;left:0;top:-2.5px;font-size:12.4px;line-height:1;color:#000">$</span></div>
<div style="left:1520.5px;top:223.27px;width:2.5px;height:10px;overflow:hidden"><span style="position:absolute;left:0;top:-2.5px;font-size:12.4px;line-height:1;color:#000">$</span></div>
<div style="left:1520.5px;top:254.53000000000003px;width:2.5px;height:10px;overflow:hidden"><span style="position:absolute;left:0;top:-2.5px;font-size:12.4px;line-height:1;color:#000">$</span></div>
<div style="left:1520.5px;top:285.79px;width:2.5px;height:10px;overflow:hidden"><span style="position:absolute;left:0;top:-2.5px;font-size:12.4px;line-height:1;color:#000">$</span></div>
<div style="left:1520.5px;top:317.05000000000007px;width:2.5px;height:10px;overflow:hidden"><span style="position:absolute;left:0;top:-2.5px;font-size:12.4px;line-height:1;color:#000">$</span></div>
<div style="left:1520.5px;top:348.31000000000006px;width:2.5px;height:10px;overflow:hidden"><span style="position:absolute;left:0;top:-2.5px;font-size:12.4px;line-height:1;color:#000">$</span></div>
<div style="left:1520.5px;top:379.57000000000005px;width:2.5px;height:10px;overflow:hidden"><span style="position:absolute;left:0;top:-2.5px;font-size:12.4px;line-height:1;color:#000">$</span></div>
<div style="left:1520.5px;top:410.83000000000004px;width:2.5px;height:10px;overflow:hidden"><span style="position:absolute;left:0;top:-2.5px;font-size:12.4px;line-height:1;color:#000">$</span></div>
<div style="left:1520.5px;top:442.09000000000003px;width:2.5px;height:10px;overflow:hidden"><span style="position:absolute;left:0;top:-2.5px;font-size:12.4px;line-height:1;color:#000">$</span></div>
<div style="left:1520.5px;top:473.35px;width:2.5px;height:10px;overflow:hidden"><span style="position:absolute;left:0;top:-2.5px;font-size:12.4px;line-height:1;color:#000">$</span></div>
<div style="left:1520.5px;top:504.61px;width:2.5px;height:10px;overflow:hidden"><span style="position:absolute;left:0;top:-2.5px;font-size:12.4px;line-height:1;color:#000">$</span></div>
<div style="left:1520.5px;top:535.87px;width:2.5px;height:10px;overflow:hidden"><span style="position:absolute;left:0;top:-2.5px;font-size:12.4px;line-height:1;color:#000">$</span></div>
<div style="left:1520.5px;top:567.13px;width:2.5px;height:10px;overflow:hidden"><span style="position:absolute;left:0;top:-2.5px;font-size:12.4px;line-height:1;color:#000">$</span></div>
<div style="left:1520.5px;top:598.3900000000001px;width:2.5px;height:10px;overflow:hidden"><span style="position:absolute;left:0;top:-2.5px;font-size:12.4px;line-height:1;color:#000">$</span></div>
<div style="left:1520.5px;top:629.6500000000001px;width:2.5px;height:10px;overflow:hidden"><span style="position:absolute;left:0;top:-2.5px;font-size:12.4px;line-height:1;color:#000">$</span></div>
<div style="left:1523px;top:49px;width:19px;height:594px;background:#e8e8e8;"></div>
<div style="left:1523px;top:49px;width:19px;height:24px;background:#fff;border:1px solid #b9b9b9;border-bottom-width:2px;"></div>
<div style="left:1523px;top:73px;width:19px;height:13px;background:#fff;border:1px solid #b9b9b9;border-top:none;"></div>
<div style="left:1523px;top:621px;width:19px;height:23px;background:#fff;border:1px solid #b9b9b9;"></div>
<svg style="left:1523px;top:49px" width="19" height="596" fill="#505050"><path d="M5.2 14 L9.9 9.2 L14.6 14 Z"/><path d="M5.2 581 L9.9 585.8 L14.6 581 Z"/></svg>
<div style="left:573px;top:643px;width:950px;height:20px;background:#e8e8e8;"></div>
<div style="left:573px;top:644px;width:22px;height:19px;background:#fff;border:1px solid #b9b9b9;"></div>
<div style="left:595px;top:644px;width:514px;height:19px;background:#fff;border:1px solid #b9b9b9;"></div>
<div style="left:1501px;top:644px;width:22px;height:19px;background:#fff;border:1px solid #b9b9b9;"></div>
<svg style="left:573px;top:644px" width="950" height="19" fill="#585858"><path d="M13 4.5 L8.2 9.2 L13 13.9 Z"/><path d="M937.4 4.5 L942.2 9.2 L937.4 13.9 Z"/></svg>
<div style="left:1523px;top:644px;width:19px;height:19px;background:#fff;"></div>
<div style="left:573px;top:663px;width:969px;height:37px;background:#fff;"></div>
<div style="left:573px;top:663px;width:37px;height:37px;background:#163553;"></div>
<svg style="left:572.6px;top:662.6px" width="38" height="38" fill="none" stroke="#fff" stroke-width="1.4" stroke-linecap="round" stroke-linejoin="round"><path d="M10.7 30.8 V17.6 L2 7.6 Q1.4 6.6 2.6 6.6 H22.4 Q25.6 6.6 24 9.4 L20.4 14"/><g stroke="none" fill="#fff"><rect x="15.4" y="16" width="5" height="2.6"/><rect x="22.4" y="16" width="5" height="2.6"/><rect x="29.4" y="16" width="5" height="2.6"/><rect x="15.4" y="21" width="5" height="1.3"/><rect x="22.4" y="21" width="5" height="1.3"/><rect x="29.4" y="21" width="5" height="1.3"/><rect x="15.4" y="25.2" width="5" height="1.3"/><rect x="22.4" y="25.2" width="5" height="1.3"/><rect x="29.4" y="25.2" width="5" height="1.3"/><rect x="15.4" y="29.4" width="5" height="1.3"/><rect x="22.4" y="29.4" width="5" height="1.3"/><rect x="29.4" y="29.4" width="5" height="1.3"/></g></svg>
<div style="left:610px;top:697px;width:62.5px;height:2px;background:#163553;"></div>
<div style="left:672px;top:663px;width:1px;height:37px;background:#d9d9d9;"></div>
<div style="left:573px;top:700px;width:969px;height:6px;background:#b9b9b9;"></div>
<div style="left:573px;top:706px;width:950px;height:33px;background:#cdcdcd;"></div>
<div style="left:573px;top:739px;width:950px;height:198px;background:#fff;"></div>
<div style="left:573px;top:761px;width:950px;height:1px;background:#c8c8c8;"></div>
<div style="left:573px;top:786px;width:950px;height:1px;background:#c8c8c8;"></div>
<div style="left:573px;top:811px;width:950px;height:1px;background:#c8c8c8;"></div>
<div style="left:573px;top:836px;width:950px;height:1px;background:#c8c8c8;"></div>
<div style="left:573px;top:861px;width:950px;height:1px;background:#c8c8c8;"></div>
<div style="left:573px;top:886px;width:950px;height:1px;background:#c8c8c8;"></div>
<div style="left:573px;top:911px;width:950px;height:1px;background:#c8c8c8;"></div>
<div style="left:573px;top:936px;width:950px;height:1px;background:#c8c8c8;"></div>
<div style="left:602px;top:739px;width:1px;height:198px;background:#c8c8c8;"></div>
<div style="left:730px;top:739px;width:1px;height:198px;background:#c8c8c8;"></div>
<div style="left:846px;top:739px;width:1px;height:198px;background:#c8c8c8;"></div>
<div style="left:962px;top:739px;width:1px;height:198px;background:#c8c8c8;"></div>
<div style="left:1136px;top:739px;width:1px;height:198px;background:#c8c8c8;"></div>
<div style="left:1276px;top:739px;width:1px;height:198px;background:#c8c8c8;"></div>
<div style="left:1497px;top:739px;width:1px;height:198px;background:#c8c8c8;"></div>
<div style="left:573px;top:937px;width:950px;height:19px;background:#e8e8e8;"></div>
<div style="left:573px;top:938px;width:22px;height:18px;background:#fff;border:1px solid #b9b9b9;"></div>
<div style="left:595px;top:938px;width:364px;height:18px;background:#fff;border:1px solid #b9b9b9;"></div>
<div style="left:1501px;top:938px;width:22px;height:18px;background:#fff;border:1px solid #b9b9b9;"></div>
<svg style="left:573px;top:938px" width="950" height="19" fill="#585858"><path d="M13 4.3 L8.2 9 L13 13.7 Z"/><path d="M937.4 4.3 L942.2 9 L937.4 13.7 Z"/></svg>
<div style="left:1523px;top:938px;width:19px;height:18px;background:#fff;"></div>
<div style="left:573px;top:956px;width:969px;height:43.7px;background:#163553;"></div>
<div style="left:579px;top:963px;width:256px;height:31px;background:#fff;border:2px solid #dcdcdc;"></div>
<svg style="left:572.5px;top:956px" width="969" height="44" fill="none" stroke-linecap="round" stroke-linejoin="round"><g stroke="#1d436b" stroke-width="1.5"><circle cx="242.4" cy="21.2" r="5.3"/><path d="M246.4 25.2 L251.4 30.2"/></g><g stroke="#fff" stroke-width="2.2" stroke-linecap="butt" stroke-linejoin="miter"><path d="M280 28 L290.8 17.4 L301.6 28"/><path d="M329.6 17.4 L340.4 28 L351.2 17.4"/></g></svg>
<div style="left:1151.6px;top:962px;width:40px;height:32px;overflow:hidden"><span style="position:absolute;right:3.6px;top:9px;font-size:18.5px;line-height:1;white-space:pre;color:#cfd4da;transform:scaleX(1.05);transform-origin:100% 0">Column:</span></div>
<div style="left:1248px;top:956px;width:63px;height:43.7px;background:#234a6e;"></div>
<div style="left:1317px;top:956px;width:62px;height:43.7px;background:#234a6e;"></div>
<svg style="left:1248px;top:956px" width="140" height="44" fill="none" stroke="#e8ecf0" stroke-width="1.1" stroke-linejoin="round"><path d="M32.6 8.4 L18 12.8 V31.6 L32.6 36.4 Z"/><path d="M21.6 16.6 L29.4 27.4 M29.4 16.6 L21.6 27.4"/><path d="M33 12.4 H43.6 V32.4 H33" stroke-dasharray="2.2 2"/><path d="M86.6 9 V34.6 M114.4 9 V34.6" stroke="#c6ced8" stroke-width="1.3"/><path d="M91 21.8 H110"/><path d="M95.4 17.4 L91 21.8 L95.4 26.2 M105.6 17.4 L110 21.8 L105.6 26.2"/></svg>
<div style="left:1404px;top:975.6px;width:113px;height:4.6px;background:#d2d2d2;"></div>
<div style="left:1447px;top:971px;width:14px;height:14px;background:#ff3868;border-radius:50%;"></div>
<div style="left:1542px;top:49px;width:34px;height:951px;background:#fff;"></div>
<svg style="left:1541.5px;top:48px" width="36" height="40" fill="none" stroke="#2c5279" stroke-width="1" stroke-linecap="round"><path d="M17.03 26.88 A7.9 7.9 0 1 0 11.56 23.05"/><path d="M10.7 25.9 H14.2 V22.6"/><path d="M16.5 15.9 V22.5 L21.4 19.2 Z" fill="#2c5279" stroke="none"/></svg>
<svg style="left:1680px;top:100px" width="140" height="50"><rect x="5.6" y="5.2" width="126.6" height="39.4" rx="2" fill="#fff" stroke="#dedede" stroke-width="1.6" stroke-dasharray="5.2 3.2"/></svg>
<div style="left:1756px;top:379px;width:12.3px;height:12px;background:transparent;border:1.3px solid #111;"></div>
<div style="left:1756px;top:575px;width:12.3px;height:12.3px;background:#000;"></div>
<span class="t" style="left:60.80px;top:14.00px;font-size:18px;color:#fff;transform:scaleX(0.8108);">ACCEPT</span>
<span class="t" style="left:214.70px;top:14.00px;font-size:18px;color:#fff;transform:scaleX(0.8599);">CANCEL</span>
<span class="t" style="left:371.70px;top:14.00px;font-size:18px;color:#fff;transform:scaleX(0.8398);">APPLY TO...</span>
<span class="t" style="left:44.00px;top:54.50px;font-size:24px;color:#404040;font-weight:bold;transform:scaleX(0.9703);">Guided Trapping</span>
<span class="t" style="left:6.50px;top:120.00px;font-size:18px;color:#000;font-weight:bold;transform:scaleX(0.9472);">Select Header Row</span>
<span class="t" style="left:415.70px;top:123.25px;font-size:17.5px;color:#444;transform:scaleX(0.9479);">Go To Step</span>
<span class="t" style="left:12.50px;top:185.00px;font-size:17px;color:#3c3c3c;font-weight:bold;transform:scaleX(1.0105);">Select the row that contains your column names and click</span>
<span class="t" style="left:12.50px;top:206.00px;font-size:17px;color:#3c3c3c;font-weight:bold;transform:scaleX(1.0276);">&#x27;Apply Headers&#x27;.</span>
<span class="t" style="left:153.70px;top:206.00px;font-size:17px;color:#3c3c3c;transform:scaleX(1.0178);">These will apply to your current columns as</span>
<span class="t" style="left:12.50px;top:227.00px;font-size:17px;color:#3c3c3c;transform:scaleX(1.0051);">names and give you a chance to make changes. Once you are</span>
<span class="t" style="left:12.50px;top:248.00px;font-size:17px;color:#3c3c3c;transform:scaleX(1.0099);">satisfied, or</span>
<span class="t" style="left:105.40px;top:248.00px;font-size:17px;color:#3c3c3c;font-weight:bold;transform:scaleX(1.0224);">if you don&#x27;t have headers, click &#x27;Next&#x27;.</span>
<span class="t" style="left:28.60px;top:305.75px;font-size:15.5px;color:#555;transform:scaleX(0.9911);">Ab</span>
<span class="t" style="left:65.80px;top:304.50px;font-size:16px;color:#404040;transform:scaleX(0.9134);">Segment</span>
<span class="t" style="left:28.60px;top:348.75px;font-size:15.5px;color:#555;transform:scaleX(0.9911);">Ab</span>
<span class="t" style="left:65.80px;top:348.50px;font-size:16px;color:#404040;transform:scaleX(0.9370);">Country</span>
<span class="t" style="left:28.60px;top:392.75px;font-size:15.5px;color:#555;transform:scaleX(0.9911);">Ab</span>
<span class="t" style="left:65.80px;top:392.50px;font-size:16px;color:#404040;transform:scaleX(0.9303);">Product</span>
<span class="t" style="left:28.60px;top:436.75px;font-size:15.5px;color:#555;transform:scaleX(0.9911);">Ab</span>
<span class="t" style="left:65.80px;top:436.50px;font-size:16px;color:#404040;transform:scaleX(0.9168);">Discount Band</span>
<span class="t" style="left:30.80px;top:477.00px;font-size:21px;color:#555;transform:scaleX(1.1123);">#</span>
<span class="t" style="left:65.80px;top:479.50px;font-size:16px;color:#404040;transform:scaleX(0.9106);">Units Sold</span>
<span class="t" style="left:28.60px;top:523.75px;font-size:15.5px;color:#555;transform:scaleX(0.9911);">Ab</span>
<span class="t" style="left:65.80px;top:523.50px;font-size:16px;color:#404040;transform:scaleX(0.9333);">Manufacturing Price</span>
<span class="t" style="left:28.60px;top:567.75px;font-size:15.5px;color:#555;transform:scaleX(0.9911);">Ab</span>
<span class="t" style="left:65.80px;top:567.50px;font-size:16px;color:#404040;transform:scaleX(0.8612);">Sale Price</span>
<span class="t" style="left:28.60px;top:611.75px;font-size:15.5px;color:#555;transform:scaleX(0.9911);">Ab</span>
<span class="t" style="left:65.80px;top:611.50px;font-size:16px;color:#404040;transform:scaleX(0.8538);">Gross Sales</span>
<span class="t" style="left:28.60px;top:655.75px;font-size:15.5px;color:#555;transform:scaleX(0.9911);">Ab</span>
<span class="t" style="left:65.80px;top:654.50px;font-size:16px;color:#404040;transform:scaleX(0.9167);">Discounts</span>
<span class="t" style="left:384.90px;top:700.75px;font-size:15.5px;color:#404040;transform:scaleX(0.8388);">APPLY HEADERS</span>
<span class="t" style="left:338.50px;top:757.75px;font-size:15.5px;color:#404040;transform:scaleX(0.8527);">BACK</span>
<span class="t" style="left:451.20px;top:757.75px;font-size:15.5px;color:#fff;transform:scaleX(0.8466);">NEXT</span>
<span class="t" style="left:556.20px;top:163.00px;font-size:20px;color:#1e1e1e;-webkit-text-stroke:0.45px #1e1e1e;transform-origin:0 17.00px;transform:rotate(-90deg) scaleX(0.9928);">Templates</span>
<span class="t" style="left:656.60px;top:56.25px;font-size:19.5px;color:#e6e6e6;font-weight:bold;">A</span>
<span class="t" style="left:785.90px;top:56.25px;font-size:19.5px;color:#e6e6e6;font-weight:bold;">B</span>
<span class="t" style="left:908.40px;top:56.25px;font-size:19.5px;color:#e6e6e6;font-weight:bold;">C</span>
<span class="t" style="left:1002.35px;top:56.25px;font-size:19.5px;color:#e6e6e6;font-weight:bold;">D</span>
<span class="t" style="left:1096.89px;top:56.25px;font-size:19.5px;color:#e6e6e6;font-weight:bold;">E</span>
<span class="t" style="left:1207.39px;top:56.25px;font-size:19.5px;color:#e6e6e6;font-weight:bold;">F</span>
<span class="t" style="left:1315.81px;top:56.25px;font-size:19.5px;color:#e6e6e6;font-weight:bold;">G</span>
<span class="t" style="left:1410.05px;top:56.25px;font-size:19.5px;color:#e6e6e6;font-weight:bold;">H</span>
<span class="t" style="left:1507.79px;top:56.25px;font-size:19.5px;color:#e6e6e6;font-weight:bold;">I</span>
<span class="t" style="left:586.04px;top:88.00px;font-size:18px;color:#f2f2f2;-webkit-text-stroke:0.4px #f2f2f2;transform:scaleX(0.9500);">1</span>
<span class="t" style="left:586.04px;top:119.00px;font-size:18px;color:#404040;-webkit-text-stroke:0.4px #404040;transform:scaleX(0.9500);">2</span>
<span class="t" style="left:586.04px;top:150.00px;font-size:18px;color:#404040;-webkit-text-stroke:0.4px #404040;transform:scaleX(0.9500);">3</span>
<span class="t" style="left:586.04px;top:181.00px;font-size:18px;color:#404040;-webkit-text-stroke:0.4px #404040;transform:scaleX(0.9500);">4</span>
<span class="t" style="left:586.04px;top:213.00px;font-size:18px;color:#404040;-webkit-text-stroke:0.4px #404040;transform:scaleX(0.9500);">5</span>
<span class="t" style="left:586.04px;top:244.00px;font-size:18px;color:#404040;-webkit-text-stroke:0.4px #404040;transform:scaleX(0.9500);">6</span>
<span class="t" style="left:586.04px;top:275.00px;font-size:18px;color:#404040;-webkit-text-stroke:0.4px #404040;transform:scaleX(0.9500);">7</span>
<span class="t" style="left:586.04px;top:306.00px;font-size:18px;color:#404040;-webkit-text-stroke:0.4px #404040;transform:scaleX(0.9500);">8</span>
<span class="t" style="left:586.04px;top:338.00px;font-size:18px;color:#404040;-webkit-text-stroke:0.4px #404040;transform:scaleX(0.9500);">9</span>
<span class="t" style="left:581.29px;top:369.00px;font-size:18px;color:#404040;-webkit-text-stroke:0.4px #404040;transform:scaleX(0.9500);">10</span>
<span class="t" style="left:581.92px;top:400.00px;font-size:18px;color:#404040;-webkit-text-stroke:0.4px #404040;transform:scaleX(0.9500);">11</span>
<span class="t" style="left:581.29px;top:431.00px;font-size:18px;color:#404040;-webkit-text-stroke:0.4px #404040;transform:scaleX(0.9500);">12</span>
<span class="t" style="left:581.29px;top:463.00px;font-size:18px;color:#404040;-webkit-text-stroke:0.4px #404040;transform:scaleX(0.9500);">13</span>
<span class="t" style="left:581.29px;top:494.00px;font-size:18px;color:#404040;-webkit-text-stroke:0.4px #404040;transform:scaleX(0.9500);">14</span>
<span class="t" style="left:581.29px;top:525.00px;font-size:18px;color:#404040;-webkit-text-stroke:0.4px #404040;transform:scaleX(0.9500);">15</span>
<span class="t" style="left:581.29px;top:557.00px;font-size:18px;color:#404040;-webkit-text-stroke:0.4px #404040;transform:scaleX(0.9500);">16</span>
<span class="t" style="left:581.29px;top:588.00px;font-size:18px;color:#404040;-webkit-text-stroke:0.4px #404040;transform:scaleX(0.9500);">17</span>
<span class="t" style="left:581.29px;top:619.00px;font-size:18px;color:#404040;-webkit-text-stroke:0.4px #404040;transform:scaleX(0.9500);">18</span>
<span class="t" style="left:613.30px;top:95.80px;font-size:12.4px;color:#1b1b3a;transform:scaleX(0.9719);">Segment</span>
<span class="t" style="left:721.00px;top:95.80px;font-size:12.4px;color:#1b1b3a;">Country</span>
<span class="t" style="left:872.00px;top:95.80px;font-size:12.4px;color:#1b1b3a;">Product</span>
<span class="t" style="left:965.70px;top:95.80px;font-size:12.4px;color:#1b1b3a;transform:scaleX(0.9926);">Discount Band</span>
<span class="t" style="left:1059.60px;top:95.80px;font-size:12.4px;color:#1b1b3a;transform:scaleX(0.9897);">Units Sold</span>
<span class="t" style="left:1153.40px;top:95.80px;font-size:12.4px;color:#1b1b3a;transform:scaleX(1.0254);">Manufacturing Price</span>
<span class="t" style="left:1279.40px;top:95.80px;font-size:12.4px;color:#1b1b3a;transform:scaleX(0.9454);">Sale Price</span>
<span class="t" style="left:1373.40px;top:95.80px;font-size:12.4px;color:#1b1b3a;transform:scaleX(0.9187);">Gross Sales</span>
<span class="t" style="left:1467.10px;top:95.80px;font-size:12.4px;color:#1b1b3a;transform:scaleX(0.9815);">Discounts</span>
<span class="t" style="left:613.40px;top:128.80px;font-size:12.4px;color:#000;transform:scaleX(1.0192);">Government</span>
<span class="t" style="left:720.70px;top:128.80px;font-size:12.4px;color:#000;transform:scaleX(0.9400);">Canada</span>
<span class="t" style="left:872.00px;top:128.80px;font-size:12.4px;color:#000;">Carretera</span>
<span class="t" style="left:965.70px;top:128.80px;font-size:12.4px;color:#000;">None</span>
<span class="t" style="left:1086.69px;top:128.80px;font-size:12.4px;color:#000;">1618.5</span>
<span class="t" style="left:1219.68px;top:128.80px;font-size:12.4px;color:#000;">$3.00</span>
<span class="t" style="left:1306.79px;top:128.80px;font-size:12.4px;color:#000;">$20.00</span>
<span class="t" style="left:1379.54px;top:128.80px;font-size:12.4px;color:#000;">$32,370....</span>
<span class="t" style="left:613.40px;top:159.80px;font-size:12.4px;color:#000;transform:scaleX(1.0192);">Government</span>
<span class="t" style="left:720.70px;top:159.80px;font-size:12.4px;color:#000;">Germany</span>
<span class="t" style="left:872.00px;top:159.80px;font-size:12.4px;color:#000;">Carretera</span>
<span class="t" style="left:965.70px;top:159.80px;font-size:12.4px;color:#000;">None</span>
<span class="t" style="left:1097.02px;top:159.80px;font-size:12.4px;color:#000;">1321</span>
<span class="t" style="left:1219.68px;top:159.80px;font-size:12.4px;color:#000;">$3.00</span>
<span class="t" style="left:1306.79px;top:159.80px;font-size:12.4px;color:#000;">$20.00</span>
<span class="t" style="left:1379.54px;top:159.80px;font-size:12.4px;color:#000;">$26,420....</span>
<span class="t" style="left:613.40px;top:190.80px;font-size:12.4px;color:#000;transform:scaleX(1.0580);">Midmarket</span>
<span class="t" style="left:720.70px;top:190.80px;font-size:12.4px;color:#000;">France</span>
<span class="t" style="left:872.00px;top:190.80px;font-size:12.4px;color:#000;">Carretera</span>
<span class="t" style="left:965.70px;top:190.80px;font-size:12.4px;color:#000;">None</span>
<span class="t" style="left:1097.02px;top:190.80px;font-size:12.4px;color:#000;">2178</span>
<span class="t" style="left:1219.68px;top:190.80px;font-size:12.4px;color:#000;">$3.00</span>
<span class="t" style="left:1306.79px;top:190.80px;font-size:12.4px;color:#000;">$15.00</span>
<span class="t" style="left:1379.54px;top:190.80px;font-size:12.4px;color:#000;">$32,670....</span>
<span class="t" style="left:613.40px;top:221.80px;font-size:12.4px;color:#000;transform:scaleX(1.0580);">Midmarket</span>
<span class="t" style="left:720.70px;top:221.80px;font-size:12.4px;color:#000;">Germany</span>
<span class="t" style="left:872.00px;top:221.80px;font-size:12.4px;color:#000;">Carretera</span>
<span class="t" style="left:965.70px;top:221.80px;font-size:12.4px;color:#000;">None</span>
<span class="t" style="left:1103.91px;top:221.80px;font-size:12.4px;color:#000;">888</span>
<span class="t" style="left:1219.68px;top:221.80px;font-size:12.4px;color:#000;">$3.00</span>
<span class="t" style="left:1306.79px;top:221.80px;font-size:12.4px;color:#000;">$15.00</span>
<span class="t" style="left:1379.54px;top:221.80px;font-size:12.4px;color:#000;">$13,320....</span>
<span class="t" style="left:613.40px;top:253.80px;font-size:12.4px;color:#000;transform:scaleX(1.0580);">Midmarket</span>
<span class="t" style="left:720.70px;top:253.80px;font-size:12.4px;color:#000;">Mexico</span>
<span class="t" style="left:872.00px;top:253.80px;font-size:12.4px;color:#000;">Carretera</span>
<span class="t" style="left:965.70px;top:253.80px;font-size:12.4px;color:#000;">None</span>
<span class="t" style="left:1097.02px;top:253.80px;font-size:12.4px;color:#000;">2470</span>
<span class="t" style="left:1219.68px;top:253.80px;font-size:12.4px;color:#000;">$3.00</span>
<span class="t" style="left:1306.79px;top:253.80px;font-size:12.4px;color:#000;">$15.00</span>
<span class="t" style="left:1379.54px;top:253.80px;font-size:12.4px;color:#000;">$37,050....</span>
<span class="t" style="left:613.40px;top:284.80px;font-size:12.4px;color:#000;transform:scaleX(1.0192);">Government</span>
<span class="t" style="left:720.70px;top:284.80px;font-size:12.4px;color:#000;">Germany</span>
<span class="t" style="left:872.00px;top:284.80px;font-size:12.4px;color:#000;">Carretera</span>
<span class="t" style="left:965.70px;top:284.80px;font-size:12.4px;color:#000;">None</span>
<span class="t" style="left:1097.02px;top:284.80px;font-size:12.4px;color:#000;">1513</span>
<span class="t" style="left:1219.68px;top:284.80px;font-size:12.4px;color:#000;">$3.00</span>
<span class="t" style="left:1299.90px;top:284.80px;font-size:12.4px;color:#000;">$350.00</span>
<span class="t" style="left:1376.08px;top:284.80px;font-size:12.4px;color:#000;">$529,550...</span>
<span class="t" style="left:613.40px;top:315.80px;font-size:12.4px;color:#000;transform:scaleX(1.0580);">Midmarket</span>
<span class="t" style="left:720.70px;top:315.80px;font-size:12.4px;color:#000;">Germany</span>
<span class="t" style="left:872.00px;top:315.80px;font-size:12.4px;color:#000;">Montana</span>
<span class="t" style="left:965.70px;top:315.80px;font-size:12.4px;color:#000;">None</span>
<span class="t" style="left:1103.91px;top:315.80px;font-size:12.4px;color:#000;">921</span>
<span class="t" style="left:1219.68px;top:315.80px;font-size:12.4px;color:#000;">$5.00</span>
<span class="t" style="left:1306.79px;top:315.80px;font-size:12.4px;color:#000;">$15.00</span>
<span class="t" style="left:1379.54px;top:315.80px;font-size:12.4px;color:#000;">$13,815....</span>
<span class="t" style="left:613.40px;top:346.80px;font-size:12.4px;color:#000;">Channel Par...</span>
<span class="t" style="left:720.70px;top:346.80px;font-size:12.4px;color:#000;transform:scaleX(0.9400);">Canada</span>
<span class="t" style="left:872.00px;top:346.80px;font-size:12.4px;color:#000;">Montana</span>
<span class="t" style="left:965.70px;top:346.80px;font-size:12.4px;color:#000;">None</span>
<span class="t" style="left:1097.02px;top:346.80px;font-size:12.4px;color:#000;">2518</span>
<span class="t" style="left:1219.68px;top:346.80px;font-size:12.4px;color:#000;">$5.00</span>
<span class="t" style="left:1306.79px;top:346.80px;font-size:12.4px;color:#000;">$12.00</span>
<span class="t" style="left:1379.54px;top:346.80px;font-size:12.4px;color:#000;">$30,216....</span>
<span class="t" style="left:613.40px;top:378.80px;font-size:12.4px;color:#000;transform:scaleX(1.0192);">Government</span>
<span class="t" style="left:720.70px;top:378.80px;font-size:12.4px;color:#000;">France</span>
<span class="t" style="left:872.00px;top:378.80px;font-size:12.4px;color:#000;">Montana</span>
<span class="t" style="left:965.70px;top:378.80px;font-size:12.4px;color:#000;">None</span>
<span class="t" style="left:1097.02px;top:378.80px;font-size:12.4px;color:#000;">1899</span>
<span class="t" style="left:1219.68px;top:378.80px;font-size:12.4px;color:#000;">$5.00</span>
<span class="t" style="left:1306.79px;top:378.80px;font-size:12.4px;color:#000;">$20.00</span>
<span class="t" style="left:1379.54px;top:378.80px;font-size:12.4px;color:#000;">$37,980....</span>
<span class="t" style="left:613.40px;top:409.80px;font-size:12.4px;color:#000;">Channel Par...</span>
<span class="t" style="left:720.70px;top:409.80px;font-size:12.4px;color:#000;">Germany</span>
<span class="t" style="left:872.00px;top:409.80px;font-size:12.4px;color:#000;">Montana</span>
<span class="t" style="left:965.70px;top:409.80px;font-size:12.4px;color:#000;">None</span>
<span class="t" style="left:1097.02px;top:409.80px;font-size:12.4px;color:#000;">1545</span>
<span class="t" style="left:1219.68px;top:409.80px;font-size:12.4px;color:#000;">$5.00</span>
<span class="t" style="left:1306.79px;top:409.80px;font-size:12.4px;color:#000;">$12.00</span>
<span class="t" style="left:1379.54px;top:409.80px;font-size:12.4px;color:#000;">$18,540....</span>
<span class="t" style="left:613.40px;top:440.80px;font-size:12.4px;color:#000;transform:scaleX(1.0580);">Midmarket</span>
<span class="t" style="left:720.70px;top:440.80px;font-size:12.4px;color:#000;">Mexico</span>
<span class="t" style="left:872.00px;top:440.80px;font-size:12.4px;color:#000;">Montana</span>
<span class="t" style="left:965.70px;top:440.80px;font-size:12.4px;color:#000;">None</span>
<span class="t" style="left:1097.02px;top:440.80px;font-size:12.4px;color:#000;">2470</span>
<span class="t" style="left:1219.68px;top:440.80px;font-size:12.4px;color:#000;">$5.00</span>
<span class="t" style="left:1306.79px;top:440.80px;font-size:12.4px;color:#000;">$15.00</span>
<span class="t" style="left:1379.54px;top:440.80px;font-size:12.4px;color:#000;">$37,050....</span>
<span class="t" style="left:613.40px;top:471.80px;font-size:12.4px;color:#000;">Enterprise</span>
<span class="t" style="left:720.70px;top:471.80px;font-size:12.4px;color:#000;transform:scaleX(0.9400);">Canada</span>
<span class="t" style="left:872.00px;top:471.80px;font-size:12.4px;color:#000;">Montana</span>
<span class="t" style="left:965.70px;top:471.80px;font-size:12.4px;color:#000;">None</span>
<span class="t" style="left:1086.69px;top:471.80px;font-size:12.4px;color:#000;">2665.5</span>
<span class="t" style="left:1219.68px;top:471.80px;font-size:12.4px;color:#000;">$5.00</span>
<span class="t" style="left:1299.90px;top:471.80px;font-size:12.4px;color:#000;">$125.00</span>
<span class="t" style="left:1376.08px;top:471.80px;font-size:12.4px;color:#000;">$333,187...</span>
<span class="t" style="left:613.40px;top:503.80px;font-size:12.4px;color:#000;">Small Busin...</span>
<span class="t" style="left:720.70px;top:503.80px;font-size:12.4px;color:#000;">Mexico</span>
<span class="t" style="left:872.00px;top:503.80px;font-size:12.4px;color:#000;">Montana</span>
<span class="t" style="left:965.70px;top:503.80px;font-size:12.4px;color:#000;">None</span>
<span class="t" style="left:1103.91px;top:503.80px;font-size:12.4px;color:#000;">958</span>
<span class="t" style="left:1219.68px;top:503.80px;font-size:12.4px;color:#000;">$5.00</span>
<span class="t" style="left:1299.90px;top:503.80px;font-size:12.4px;color:#000;">$300.00</span>
<span class="t" style="left:1376.08px;top:503.80px;font-size:12.4px;color:#000;">$287,400...</span>
<span class="t" style="left:613.40px;top:534.80px;font-size:12.4px;color:#000;transform:scaleX(1.0192);">Government</span>
<span class="t" style="left:720.70px;top:534.80px;font-size:12.4px;color:#000;">Germany</span>
<span class="t" style="left:872.00px;top:534.80px;font-size:12.4px;color:#000;">Montana</span>
<span class="t" style="left:965.70px;top:534.80px;font-size:12.4px;color:#000;">None</span>
<span class="t" style="left:1097.02px;top:534.80px;font-size:12.4px;color:#000;">2146</span>
<span class="t" style="left:1219.68px;top:534.80px;font-size:12.4px;color:#000;">$5.00</span>
<span class="t" style="left:1313.68px;top:534.80px;font-size:12.4px;color:#000;">$7.00</span>
<span class="t" style="left:1379.54px;top:534.80px;font-size:12.4px;color:#000;">$15,022....</span>
<span class="t" style="left:613.40px;top:565.80px;font-size:12.4px;color:#000;">Enterprise</span>
<span class="t" style="left:720.70px;top:565.80px;font-size:12.4px;color:#000;transform:scaleX(0.9400);">Canada</span>
<span class="t" style="left:872.00px;top:565.80px;font-size:12.4px;color:#000;">Montana</span>
<span class="t" style="left:965.70px;top:565.80px;font-size:12.4px;color:#000;">None</span>
<span class="t" style="left:1103.91px;top:565.80px;font-size:12.4px;color:#000;">345</span>
<span class="t" style="left:1219.68px;top:565.80px;font-size:12.4px;color:#000;">$5.00</span>
<span class="t" style="left:1299.90px;top:565.80px;font-size:12.4px;color:#000;">$125.00</span>
<span class="t" style="left:1379.54px;top:565.80px;font-size:12.4px;color:#000;">$43,125....</span>
<span class="t" style="left:613.40px;top:596.80px;font-size:12.4px;color:#000;transform:scaleX(1.0580);">Midmarket</span>
<span class="t" style="left:720.70px;top:596.80px;font-size:12.4px;color:#000;">United States of Am...</span>
<span class="t" style="left:872.00px;top:596.80px;font-size:12.4px;color:#000;">Montana</span>
<span class="t" style="left:965.70px;top:596.80px;font-size:12.4px;color:#000;">None</span>
<span class="t" style="left:1103.91px;top:596.80px;font-size:12.4px;color:#000;">615</span>
<span class="t" style="left:1219.68px;top:596.80px;font-size:12.4px;color:#000;">$5.00</span>
<span class="t" style="left:1306.79px;top:596.80px;font-size:12.4px;color:#000;">$15.00</span>
<span class="t" style="left:1382.97px;top:596.80px;font-size:12.4px;color:#000;">$9,225.00</span>
<span class="t" style="left:613.40px;top:628.80px;font-size:12.4px;color:#000;transform:scaleX(1.0192);">Government</span>
<span class="t" style="left:720.70px;top:628.80px;font-size:12.4px;color:#000;transform:scaleX(0.9400);">Canada</span>
<span class="t" style="left:872.00px;top:628.80px;font-size:12.4px;color:#000;">Paseo</span>
<span class="t" style="left:965.70px;top:628.80px;font-size:12.4px;color:#000;">None</span>
<span class="t" style="left:1103.91px;top:628.80px;font-size:12.4px;color:#000;">292</span>
<span class="t" style="left:1212.79px;top:628.80px;font-size:12.4px;color:#000;">$10.00</span>
<span class="t" style="left:1306.79px;top:628.80px;font-size:12.4px;color:#000;">$20.00</span>
<span class="t" style="left:1382.97px;top:628.80px;font-size:12.4px;color:#000;">$5,840.00</span>
<span class="t" style="left:617.60px;top:672.00px;font-size:15px;color:#17375a;font-weight:bold;transform:scaleX(0.9471);">Sheet1</span>
<span class="t" style="left:604.80px;top:711.50px;font-size:16px;color:#585858;transform:scaleX(1.0062);">Ab</span>
<span class="t" style="left:630.40px;top:713.85px;font-size:14.3px;color:#404040;-webkit-text-stroke:0.45px #404040;transform:scaleX(1.0483);">Segment</span>
<span class="t" style="left:733.40px;top:711.50px;font-size:16px;color:#585858;transform:scaleX(1.0062);">Ab</span>
<span class="t" style="left:759.20px;top:713.85px;font-size:14.3px;color:#404040;-webkit-text-stroke:0.45px #404040;transform:scaleX(1.0787);">Country</span>
<span class="t" style="left:849.50px;top:711.50px;font-size:16px;color:#585858;transform:scaleX(1.0062);">Ab</span>
<span class="t" style="left:875.40px;top:713.85px;font-size:14.3px;color:#404040;-webkit-text-stroke:0.45px #404040;transform:scaleX(1.0673);">Product</span>
<span class="t" style="left:966.00px;top:711.50px;font-size:16px;color:#585858;transform:scaleX(1.0062);">Ab</span>
<span class="t" style="left:991.90px;top:713.85px;font-size:14.3px;color:#404040;-webkit-text-stroke:0.45px #404040;transform:scaleX(1.0495);">Discount Band</span>
<span class="t" style="left:1143.60px;top:711.00px;font-size:19px;color:#555;transform:scaleX(1.0682);">#</span>
<span class="t" style="left:1165.50px;top:713.85px;font-size:14.3px;color:#404040;-webkit-text-stroke:0.45px #404040;transform:scaleX(1.0511);">Units Sold</span>
<span class="t" style="left:1279.90px;top:711.50px;font-size:16px;color:#585858;transform:scaleX(1.0062);">Ab</span>
<span class="t" style="left:1305.70px;top:713.85px;font-size:14.3px;color:#404040;-webkit-text-stroke:0.45px #404040;transform:scaleX(1.0774);">Manufacturing Price</span>
<span class="t" style="left:1499.50px;top:711.50px;font-size:16px;color:#585858;transform:scaleX(1.0062);">Ab</span>
<span class="t" style="left:583.87px;top:740.80px;font-size:13.4px;color:#000;">1</span>
<span class="t" style="left:606.40px;top:740.80px;font-size:13.4px;color:#000;transform:scaleX(1.0178);">Government</span>
<span class="t" style="left:735.10px;top:740.80px;font-size:13.4px;color:#000;transform:scaleX(0.9526);">Canada</span>
<span class="t" style="left:851.30px;top:740.80px;font-size:13.4px;color:#000;transform:scaleX(0.9794);">Carretera</span>
<span class="t" style="left:967.50px;top:740.80px;font-size:13.4px;color:#000;transform:scaleX(1.0151);">None</span>
<span class="t" style="left:1140.80px;top:740.80px;font-size:13.4px;color:#000;">1618.5</span>
<span class="t" style="left:1285.50px;top:740.80px;font-size:13.4px;color:#000;">$3.00</span>
<span class="t" style="left:1505.40px;top:740.80px;font-size:13.4px;color:#000;">$20</span>
<span class="t" style="left:583.87px;top:765.80px;font-size:13.4px;color:#000;">2</span>
<span class="t" style="left:606.40px;top:765.80px;font-size:13.4px;color:#000;transform:scaleX(1.0178);">Government</span>
<span class="t" style="left:735.10px;top:765.80px;font-size:13.4px;color:#000;transform:scaleX(0.9877);">Germany</span>
<span class="t" style="left:851.30px;top:765.80px;font-size:13.4px;color:#000;transform:scaleX(0.9794);">Carretera</span>
<span class="t" style="left:967.50px;top:765.80px;font-size:13.4px;color:#000;transform:scaleX(1.0151);">None</span>
<span class="t" style="left:1140.80px;top:765.80px;font-size:13.4px;color:#000;">1321</span>
<span class="t" style="left:1285.50px;top:765.80px;font-size:13.4px;color:#000;">$3.00</span>
<span class="t" style="left:1505.40px;top:765.80px;font-size:13.4px;color:#000;">$20</span>
<span class="t" style="left:583.87px;top:790.80px;font-size:13.4px;color:#000;">3</span>
<span class="t" style="left:606.40px;top:790.80px;font-size:13.4px;color:#000;transform:scaleX(1.0461);">Midmarket</span>
<span class="t" style="left:735.10px;top:790.80px;font-size:13.4px;color:#000;transform:scaleX(0.9403);">France</span>
<span class="t" style="left:851.30px;top:790.80px;font-size:13.4px;color:#000;transform:scaleX(0.9794);">Carretera</span>
<span class="t" style="left:967.50px;top:790.80px;font-size:13.4px;color:#000;transform:scaleX(1.0151);">None</span>
<span class="t" style="left:1140.80px;top:790.80px;font-size:13.4px;color:#000;">2178</span>
<span class="t" style="left:1285.50px;top:790.80px;font-size:13.4px;color:#000;">$3.00</span>
<span class="t" style="left:1505.40px;top:790.80px;font-size:13.4px;color:#000;">$15</span>
<span class="t" style="left:583.87px;top:815.80px;font-size:13.4px;color:#000;">4</span>
<span class="t" style="left:606.40px;top:815.80px;font-size:13.4px;color:#000;transform:scaleX(1.0461);">Midmarket</span>
<span class="t" style="left:735.10px;top:815.80px;font-size:13.4px;color:#000;transform:scaleX(0.9877);">Germany</span>
<span class="t" style="left:851.30px;top:815.80px;font-size:13.4px;color:#000;transform:scaleX(0.9794);">Carretera</span>
<span class="t" style="left:967.50px;top:815.80px;font-size:13.4px;color:#000;transform:scaleX(1.0151);">None</span>
<span class="t" style="left:1140.80px;top:815.80px;font-size:13.4px;color:#000;">888</span>
<span class="t" style="left:1285.50px;top:815.80px;font-size:13.4px;color:#000;">$3.00</span>
<span class="t" style="left:1505.40px;top:815.80px;font-size:13.4px;color:#000;">$15</span>
<span class="t" style="left:583.87px;top:840.80px;font-size:13.4px;color:#000;">5</span>
<span class="t" style="left:606.40px;top:840.80px;font-size:13.4px;color:#000;transform:scaleX(1.0461);">Midmarket</span>
<span class="t" style="left:735.10px;top:840.80px;font-size:13.4px;color:#000;transform:scaleX(1.0113);">Mexico</span>
<span class="t" style="left:851.30px;top:840.80px;font-size:13.4px;color:#000;transform:scaleX(0.9794);">Carretera</span>
<span class="t" style="left:967.50px;top:840.80px;font-size:13.4px;color:#000;transform:scaleX(1.0151);">None</span>
<span class="t" style="left:1140.80px;top:840.80px;font-size:13.4px;color:#000;">2470</span>
<span class="t" style="left:1285.50px;top:840.80px;font-size:13.4px;color:#000;">$3.00</span>
<span class="t" style="left:1505.40px;top:840.80px;font-size:13.4px;color:#000;">$15</span>
<span class="t" style="left:583.87px;top:865.80px;font-size:13.4px;color:#000;">6</span>
<span class="t" style="left:606.40px;top:865.80px;font-size:13.4px;color:#000;transform:scaleX(1.0178);">Government</span>
<span class="t" style="left:735.10px;top:865.80px;font-size:13.4px;color:#000;transform:scaleX(0.9877);">Germany</span>
<span class="t" style="left:851.30px;top:865.80px;font-size:13.4px;color:#000;transform:scaleX(0.9794);">Carretera</span>
<span class="t" style="left:967.50px;top:865.80px;font-size:13.4px;color:#000;transform:scaleX(1.0151);">None</span>
<span class="t" style="left:1140.80px;top:865.80px;font-size:13.4px;color:#000;">1513</span>
<span class="t" style="left:1285.50px;top:865.80px;font-size:13.4px;color:#000;">$3.00</span>
<span class="t" style="left:1505.40px;top:865.80px;font-size:13.4px;color:#000;">$35</span>
<span class="t" style="left:583.87px;top:890.80px;font-size:13.4px;color:#000;">7</span>
<span class="t" style="left:606.40px;top:890.80px;font-size:13.4px;color:#000;transform:scaleX(1.0461);">Midmarket</span>
<span class="t" style="left:735.10px;top:890.80px;font-size:13.4px;color:#000;transform:scaleX(0.9877);">Germany</span>
<span class="t" style="left:851.30px;top:890.80px;font-size:13.4px;color:#000;transform:scaleX(1.0379);">Montana</span>
<span class="t" style="left:967.50px;top:890.80px;font-size:13.4px;color:#000;transform:scaleX(1.0151);">None</span>
<span class="t" style="left:1140.80px;top:890.80px;font-size:13.4px;color:#000;">921</span>
<span class="t" style="left:1285.50px;top:890.80px;font-size:13.4px;color:#000;">$5.00</span>
<span class="t" style="left:1505.40px;top:890.80px;font-size:13.4px;color:#000;">$15</span>
<span class="t" style="left:583.87px;top:915.80px;font-size:13.4px;color:#000;">8</span>
<span class="t" style="left:606.40px;top:915.80px;font-size:13.4px;color:#000;transform:scaleX(0.9778);">Channel Partners</span>
<span class="t" style="left:735.10px;top:915.80px;font-size:13.4px;color:#000;transform:scaleX(0.9526);">Canada</span>
<span class="t" style="left:851.30px;top:915.80px;font-size:13.4px;color:#000;transform:scaleX(1.0379);">Montana</span>
<span class="t" style="left:967.50px;top:915.80px;font-size:13.4px;color:#000;transform:scaleX(1.0151);">None</span>
<span class="t" style="left:1140.80px;top:915.80px;font-size:13.4px;color:#000;">2518</span>
<span class="t" style="left:1285.50px;top:915.80px;font-size:13.4px;color:#000;">$5.00</span>
<span class="t" style="left:1505.40px;top:915.80px;font-size:13.4px;color:#000;">$12</span>
<span class="t" style="left:590.60px;top:968.00px;font-size:18px;color:#a2a2a2;transform:scaleX(0.9069);">Search Table</span>
<span class="t" style="left:990.20px;top:970.25px;font-size:18.5px;color:#cfd4da;transform:scaleX(0.9956);">Tem</span>
<span class="t" style="left:1057.50px;top:970.25px;font-size:18.5px;color:#cfd4da;transform:scaleX(0.9553);">Trap:</span>
<span class="t" style="left:1105.80px;top:970.25px;font-size:18.5px;color:#fff;transform:scaleX(0.7129);">P</span>
<span class="t" style="left:1568.20px;top:219.00px;font-size:20px;color:#404040;-webkit-text-stroke:0.4px #404040;transform-origin:0 17.00px;transform:rotate(-90deg) scaleX(1.0424);">Cell Information</span>
<span class="t" style="left:1665.80px;top:57.50px;font-size:22px;color:#404040;-webkit-text-stroke:0.45px #404040;transform:scaleX(1.0676);">Cell Information</span>
<span class="t" style="left:1698.40px;top:117.00px;font-size:20px;color:#000;transform:scaleX(0.9992);">Segment</span>
<span class="t" style="left:1595.60px;top:182.40px;font-size:17.2px;color:#3d3d3d;-webkit-text-stroke:0.4px #3d3d3d;transform:scaleX(1.0326);">Location</span>
<span class="t" style="left:1756.00px;top:182.35px;font-size:17.3px;color:#3d3d3d;-webkit-text-stroke:0.4px #3d3d3d;transform:scaleX(0.9545);">[1, A]</span>
<span class="t" style="left:1595.60px;top:227.00px;font-size:19px;color:#3d3d3d;-webkit-text-stroke:0.45px #3d3d3d;transform:scaleX(1.1083);">H. Alignment</span>
<span class="t" style="left:1756.00px;top:229.35px;font-size:17.3px;color:#3d3d3d;-webkit-text-stroke:0.4px #3d3d3d;transform:scaleX(1.0337);">Left</span>
<span class="t" style="left:1595.60px;top:276.00px;font-size:19px;color:#3d3d3d;-webkit-text-stroke:0.45px #3d3d3d;transform:scaleX(1.0978);">V. Alignment</span>
<span class="t" style="left:1756.00px;top:278.35px;font-size:17.3px;color:#3d3d3d;-webkit-text-stroke:0.4px #3d3d3d;transform:scaleX(1.0703);">Bottom</span>
<span class="t" style="left:1595.60px;top:325.00px;font-size:19px;color:#3d3d3d;-webkit-text-stroke:0.45px #3d3d3d;transform:scaleX(1.0422);">Has Background</span>
<span class="t" style="left:1756.00px;top:327.35px;font-size:17.3px;color:#3d3d3d;-webkit-text-stroke:0.4px #3d3d3d;transform:scaleX(1.0546);">No</span>
<span class="t" style="left:1595.60px;top:374.00px;font-size:19px;color:#3d3d3d;-webkit-text-stroke:0.45px #3d3d3d;transform:scaleX(1.0571);">Background</span>
<span class="t" style="left:1595.60px;top:423.00px;font-size:19px;color:#3d3d3d;-webkit-text-stroke:0.45px #3d3d3d;transform:scaleX(1.0788);">Merged</span>
<span class="t" style="left:1756.00px;top:425.35px;font-size:17.3px;color:#3d3d3d;-webkit-text-stroke:0.4px #3d3d3d;transform:scaleX(1.0546);">No</span>
<span class="t" style="left:1595.60px;top:472.00px;font-size:19px;color:#3d3d3d;-webkit-text-stroke:0.45px #3d3d3d;transform:scaleX(1.0608);">Font Name</span>
<span class="t" style="left:1756.00px;top:474.35px;font-size:17.3px;color:#3d3d3d;-webkit-text-stroke:0.4px #3d3d3d;transform:scaleX(1.0269);">Calibri</span>
<span class="t" style="left:1595.60px;top:521.00px;font-size:19px;color:#3d3d3d;-webkit-text-stroke:0.45px #3d3d3d;transform:scaleX(1.0141);">Font Size</span>
<span class="t" style="left:1756.00px;top:523.35px;font-size:17.3px;color:#3d3d3d;-webkit-text-stroke:0.4px #3d3d3d;transform:scaleX(0.7631);">11</span>
<span class="t" style="left:1595.60px;top:570.00px;font-size:19px;color:#3d3d3d;-webkit-text-stroke:0.45px #3d3d3d;transform:scaleX(1.0620);">Font Color</span>
<span class="t" style="left:1595.60px;top:619.00px;font-size:19px;color:#3d3d3d;-webkit-text-stroke:0.45px #3d3d3d;transform:scaleX(1.0794);">Underlined</span>
<span class="t" style="left:1756.00px;top:621.35px;font-size:17.3px;color:#3d3d3d;-webkit-text-stroke:0.4px #3d3d3d;transform:scaleX(1.0546);">No</span>
<span class="t" style="left:1595.60px;top:668.00px;font-size:19px;color:#3d3d3d;-webkit-text-stroke:0.45px #3d3d3d;transform:scaleX(1.0687);">Italicized</span>
<span class="t" style="left:1756.00px;top:670.35px;font-size:17.3px;color:#3d3d3d;-webkit-text-stroke:0.4px #3d3d3d;transform:scaleX(1.0546);">No</span>
<span class="t" style="left:1595.60px;top:717.00px;font-size:19px;color:#3d3d3d;-webkit-text-stroke:0.45px #3d3d3d;transform:scaleX(1.0465);">Bold</span>
<span class="t" style="left:1756.00px;top:719.35px;font-size:17.3px;color:#3d3d3d;-webkit-text-stroke:0.4px #3d3d3d;transform:scaleX(1.0546);">No</span>
<span class="t" style="left:1595.60px;top:766.00px;font-size:19px;color:#3d3d3d;-webkit-text-stroke:0.45px #3d3d3d;transform:scaleX(1.0480);">Column Type:</span>
<span class="t" style="left:1756.00px;top:768.35px;font-size:17.3px;color:#3d3d3d;-webkit-text-stroke:0.4px #3d3d3d;transform:scaleX(1.0094);">Text</span>
<span class="t" style="left:1595.60px;top:815.00px;font-size:19px;color:#3d3d3d;-webkit-text-stroke:0.45px #3d3d3d;transform:scaleX(1.0371);">Borders</span>
<span class="t" style="left:1756.00px;top:817.35px;font-size:17.3px;color:#3d3d3d;-webkit-text-stroke:0.4px #3d3d3d;transform:scaleX(1.0405);">None</span>
<div style="left:1523px;top:706px;width:19px;height:231px;background:#e8e8e8;"></div>
<div style="left:1523px;top:706px;width:19px;height:24px;background:#fff;border:1px solid #b9b9b9;border-bottom-width:2px;"></div>
<div style="left:1523px;top:730px;width:19px;height:14px;background:#fff;border:1px solid #b9b9b9;border-top:none;"></div>
<div style="left:1523px;top:915px;width:19px;height:23px;background:#fff;border:1px solid #b9b9b9;"></div>
<svg style="left:1523px;top:706px" width="19" height="232" fill="#505050"><path d="M5.2 14.4 L9.9 9.6 L14.6 14.4 Z"/><path d="M5.2 218.4 L9.9 223.2 L14.6 218.4 Z"/></svg>
</body></html>
